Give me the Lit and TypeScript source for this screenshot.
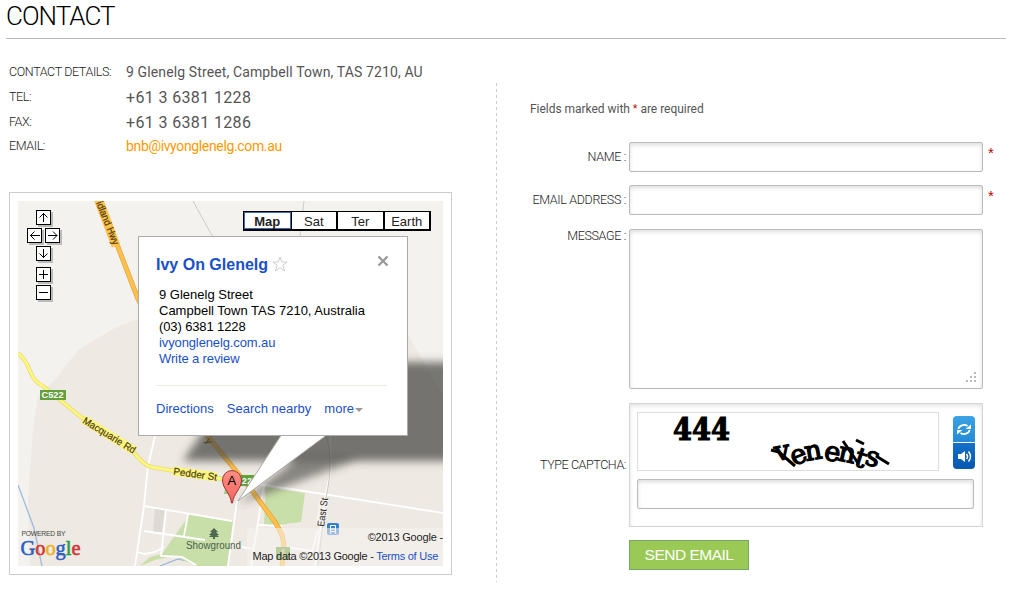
import { LitElement, html, css, svg } from "lit";
import { customElement } from "lit/decorators.js";

@customElement("contact-map")
class ContactMap extends LitElement {
  static styles = css`
    :host { display: block; box-sizing: border-box; width: 443px; height: 383px; border: 1px solid #ccc; padding: 8px; font-family: "Liberation Sans", Arial, sans-serif; }
    * { box-sizing: border-box; }
    .canvas { position: relative; width: 425px; height: 365px; overflow: hidden; }
    .terrain { display: block; width: 425px; height: 365px; }
    .types { position: absolute; left: 225px; top: 10px; display: flex; width: 188px; height: 20px; border: 2px solid #000; border-width: 1px 2px 2px; background: #fff; font-size: 13px; line-height: 19px; text-align: center; }
    .types span { flex: 1; border-left: 2px solid #000; }
    .types span:nth-child(2) { border-left: 1px solid #000; }
    .types .on { border: 1px solid #4269ac; font-weight: bold; line-height: 17px; margin-left: -1px; }
    .card { position: absolute; left: 120px; top: 35px; width: 270px; height: 200px; border: 1px solid #aaa; background: #fff; padding: 18px 20px 0 17px; font-size: 13px; line-height: 16px; color: #000; }
    .head { display: flex; align-items: flex-start; height: 32px; }
    .title { font-size: 16px; line-height: 20px; font-weight: bold; color: #1a50c8; margin-right: 4px; white-space: nowrap; }
    .star { width: 16px; height: 16px; margin-top: 1px; }
    .close { width: 12px; height: 12px; margin: 0 -2px 0 auto; }
    .body { padding-left: 3px; height: 98px; white-space: nowrap; }
    .tight { letter-spacing: -.12px; }
    a { color: #1a50c8; text-decoration: none; }
    .actions { display: flex; gap: 13px; border-top: 1px solid #edeae0; padding-top: 15px; white-space: nowrap; }
    .caret { display: inline-block; border: 4px solid transparent; border-top-color: #999; border-bottom: 0; vertical-align: 1px; margin-left: 1px; }
    .credit { position: absolute; right: 0; bottom: 0; height: 38px; width: 196px; background: rgba(245,244,242,.55); text-align: right; font-size: 11px; line-height: 19px; white-space: nowrap; letter-spacing: -.18px; }
    .credit div:last-child { padding-right: 5px; letter-spacing: -.25px; }
  `;

  pad(x: number, y: number, d: string) {
    return svg`<rect x=${x + 2} y=${y + 2} width="15" height="15" fill="#bbb"/><rect x=${x + .5} y=${y + .5} width="14" height="14" fill="#fff" stroke="#000"/><path d=${d} transform=${`translate(${x} ${y})`} fill="none" stroke="#000"/>`;
  }

  render() {
    return html`<div class="canvas">
      <svg class="terrain" viewBox="18 201 425 365" font-family="Liberation Sans">
        <defs>
          <filter id="soft" x="-20%" y="-20%" width="140%" height="140%"><feGaussianBlur stdDeviation="4"/></filter>
          <linearGradient id="pin" x1="0" y1="0" x2="0" y2="1"><stop offset="0" stop-color="#ff8f85"/><stop offset="1" stop-color="#f4645c"/></linearGradient>
        </defs>
        <rect x="18" y="201" width="425" height="365" fill="#f3f2ef"/>
        <path d="M138 319 115 328 78 350 55 380 38 396 33 430 28 500 30 566H443V395L408 335Z" fill="#eee9e2"/>
        <path d="M18 485 34 528 42 566M160 566 178 559 193 562 214 566" fill="none" stroke="#9cb9df" stroke-width="1.3"/>
        <path d="M190 514 233 521 227 566H197L173 556 155 560 140 566 150 557 162 554Z" fill="#c9dfa9"/>
        <path d="M266 487 305 493 301 522 270 526 264 524Z" fill="#c9dfa9"/>
        <path d="M155 509H165L162 532H153Z" fill="#ded9d2"/>
        <path d="M193 201 210 232 216 241M304 201 300 236" fill="none" stroke="#cfccc7"/>
        <g fill="none" stroke="#fff" stroke-width="1.8">
          <path d="M155 436 148 466 144 506 135 566M144 506 232 521M166 510 161 556 182 557 196 565M188 514 184 536M144 531 205 540M137 552 145 554 155 552 164 547M237 501 228 566M250 483 266 485 443 513M264 485 251 566M259 525 282 526M330 436 331 470 325 497 315 566M242 547 254 549M285 547 312 551 318 530"/>
        </g>
        <path d="M326 436C332 452 331 475 326 497L318 566" fill="none" stroke="#c7c3be"/>
        <g fill="none" stroke-linejoin="round">
          <path d="M97 201 118 247 138 299 205 433 250 488 275 522Q284 535 284 548L282 566" stroke="#e1a642" stroke-width="5"/>
          <path d="M97 201 118 247 138 299 205 433 250 488 275 522Q284 535 284 548L282 566" stroke="#ffc04b" stroke-width="3.500"/>
          <path d="M18 353Q26 360 30 371T43 386L82 418 132 450Q143 465 151 467L235 481" stroke="#e2d666" stroke-width="4"/>
          <path d="M18 353Q26 360 30 371T43 386L82 418 132 450Q143 465 151 467L235 481" stroke="#fff680" stroke-width="2.800"/>
          <path d="M98 198 116 246" stroke="#ffc04b" stroke-width="9"/>
          <path d="M83 419 135 451M173 471 217 477" stroke="#fff680" stroke-width="9"/>
        </g>
        <g fill="#494844" filter="url(#soft)">
          <path d="M183 461 250 362H480V461Z" opacity=".73"/>
          <path d="M298 458H362L238 504Z" opacity=".62"/>
        </g>
        <g fill="#4c3d10" font-size="10" stroke="#4c3d10" stroke-width=".2">
          <text transform="translate(96 203) rotate(68)" textLength="46" lengthAdjust="spacingAndGlyphs">idland Hwy</text>
          <text transform="translate(82 422.500) rotate(31.500)" textLength="60" lengthAdjust="spacingAndGlyphs">Macquarie Rd</text>
          <text transform="translate(173 474.500) rotate(8)" textLength="44" lengthAdjust="spacingAndGlyphs">Pedder St</text>
          <text transform="translate(205 441) rotate(55)" font-size="9">y</text>
        </g>
        <path d="M320 526 324 499" stroke="#f6f3ef" stroke-width="9"/>
        <text transform="translate(324 527) rotate(-82)" font-size="10" textLength="29" lengthAdjust="spacingAndGlyphs" fill="#222">East St</text>
        <g fill="#63a03c"><rect x="40" y="390" width="26" height="10"/><rect x="230" y="475" width="25" height="11"/><path d="M225 489h8v5h-9z" fill="#9acb7b"/></g>
        <g fill="#fff" font-size="8.500" font-weight="bold"><text x="41.500" y="398" textLength="22" lengthAdjust="spacingAndGlyphs">C522</text><text x="242" y="483.500" textLength="10">22</text></g>
        <rect x="276" y="547" width="14" height="13" fill="#6d9c42"/><path d="M283 549v11" stroke="#c6bb54" stroke-width="3"/>
        <path d="m214 528-4 4h2l-3 3h2l-2 2h4v2h2v-2h4l-2-2h2l-3-3h2z" fill="#506a50"/>
        <text x="186" y="549" font-size="10" textLength="55" lengthAdjust="spacingAndGlyphs" fill="#4a604c">Showground</text>
        <path d="M282 434 238 501 328 434" fill="#fff" stroke="#aaa"/>
        <path d="M231.500 503C230.500 493 222.500 489 222.500 480A9.500 9.500 0 0 1 241.500 480C241.500 489 233.500 493 232.500 503Z" fill="url(#pin)" stroke="#9b3732"/>
        <text x="227.500" y="485" font-size="13">A</text>
        <rect x="327" y="523" width="12" height="12" rx="2" fill="#367fce"/><path d="M330.500 525.500h5v6h-5zM331 532l-1 2M335 532l1 2" fill="#367fce" stroke="#fff"/><path d="M331 529h4" stroke="#fff"/>
        ${this.pad(36, 210, "M7.500 3v9M7.500 3.500l-4 4M7.500 3.500l4 4")}
        ${this.pad(27, 228, "M3 7.500h10M3.500 7.500l4-4M3.500 7.500l4 4")}
        ${this.pad(45, 228, "M3 7.500h9M12 7.500l-4-4M12 7.500l-4 4")}
        ${this.pad(36, 246, "M7.500 3v9M7.500 11.500l-4-4M7.500 11.500l4-4")}
        ${this.pad(36, 267, "M3 7.500h9M7.500 3v9")}
        ${this.pad(36, 285, "M3 7.500h9")}
        <text x="21.500" y="536" font-size="6.800" fill="#444" textLength="44">POWERED BY</text>
        <text y="555" font-family="Liberation Serif" font-size="22" textLength="60" lengthAdjust="spacingAndGlyphs" x="20.500" stroke-width=".6"><tspan fill="#2c5fc5" stroke="#2c5fc5">G</tspan><tspan fill="#d53331" stroke="#d53331">o</tspan><tspan fill="#e8b321" stroke="#e8b321">o</tspan><tspan fill="#2c5fc5" stroke="#2c5fc5">g</tspan><tspan fill="#249b42" stroke="#249b42">l</tspan><tspan fill="#d53331" stroke="#d53331">e</tspan></text>
      </svg>
      <div class="credit"><div>©2013 Google -</div><div>Map data ©2013 Google - <a>Terms of Use</a></div></div>
      <div class="types"><span class="on">Map</span><span>Sat</span><span>Ter</span><span>Earth</span></div>
      <div class="card">
        <div class="head"><span class="title">Ivy On Glenelg</span>
          <svg class="star" viewBox="0 0 16 16"><path d="m8 1 1.800 5H15l-4.200 3.200L12.500 15 8 11.500 3.500 15l1.700-5.800L1 6h5.200z" fill="#fff" stroke="#ccc"/></svg>
          <svg class="close" viewBox="0 0 12 12"><path d="m1.500 1.500 9 9m0-9-9 9" stroke="#999" stroke-width="2.300"/></svg></div>
        <div class="body">9 Glenelg Street<br>Campbell Town TAS 7210, Australia<br><span class="tight">(03) 6381 1228</span><br><a class="tight">ivyonglenelg.com.au</a><br><a class="tight">Write a review</a></div>
        <div class="actions"><a>Directions</a><a>Search nearby</a><a>more<i class="caret"></i></a></div>
      </div>
    </div>`;
  }
}

@customElement("app-root")
class AppRoot extends LitElement {
  static styles = css`
    :host { display: block; width: 1009px; height: 600px; overflow: hidden; background: #fff; font-family: Roboto, sans-serif; font-weight: 300; color: #222; }
    * { box-sizing: border-box; }
    h1 { margin: 0 3px 0 6px; height: 39px; border-bottom: 1px solid #bbb; font-size: 26px; line-height: 33px; font-weight: 300; color: #000; letter-spacing: -.95px; }
    .columns { display: flex; }
    .left { flex: none; width: 496px; padding: 21px 0 0 9px; }
    .details { display: grid; grid-template-columns: 117px 1fr; grid-template-rows: 25px 25px 24px 25px; height: 132px; line-height: 25px; font-size: 12.500px; white-space: nowrap; letter-spacing: -.38px; }
    .details span:nth-child(odd) { line-height: 24px; }
    .details .addr { font-size: 14px; font-weight: 400; color: #555; letter-spacing: .12px; }
    .details .phone { font-size: 16px; font-weight: 400; color: #555; letter-spacing: .36px; }
    .details .mail { color: #f90; font-weight: 400; font-size: 14px; letter-spacing: -.35px; }
    .rule { flex: none; width: 1px; height: 499px; margin-top: 44px; background: repeating-linear-gradient(#ccc 0 3px, transparent 3px 6px); }
    .form { width: 500px; padding: 62px 0 0 33px; }
    .note { height: 41px; font-size: 12px; line-height: 16px; font-weight: 400; color: #555; letter-spacing: -.03px; }
    .red { color: #b00; font-family: "Liberation Sans"; font-weight: 400; }
    .row { display: grid; grid-template-columns: 96px 354px 1fr; column-gap: 3px; font-size: 12.500px; letter-spacing: -.33px; }
    .row label { text-align: right; white-space: nowrap; }
    .field { display: block; border: 1px solid #bbb; border-radius: 2px; box-shadow: inset 0 2px 4px #ddd; background: #fff; outline: 0; padding: 0 6px; width: 100%; height: 30px; }
    .line { height: 43px; line-height: 30px; }
    .line .red { padding-left: 2px; line-height: 22px; font-size: 15px; }
    .msg { height: 174px; line-height: 14px; margin-top: 1px; }
    .area { display: flex; align-items: flex-end; justify-content: flex-end; height: 160px; padding: 5px; }
    .grip { width: 12px; height: 12px; }
    .captcha { line-height: 124px; height: 137px; }
    .captcha label { letter-spacing: -.42px; }
    .box { height: 124px; border: 1px solid #d5d5d5; box-shadow: inset 0 2px 4px #e2e2e2; padding: 8px 8px 0 7px; line-height: 0; }
    .top { display: flex; justify-content: space-between; height: 67px; }
    .challenge { width: 302px; height: 59px; border: 1px solid #ddd; letter-spacing: 0; }
    .btns { width: 22px; height: 53px; margin: 4px -1px 0 0; }
    .send { display: block; margin-left: 99px; width: 120px; height: 30px; border: 1px solid #75a866; background: #9aca55; color: #fff; font: 400 15.500px/28px "Liberation Sans"; letter-spacing: -.5px; padding: 0; }
  `;

  render() {
    const dots = [[9, 1], [5, 5], [9, 5], [1, 9], [5, 9], [9, 9]];
    return html`
      <h1>CONTACT</h1>
      <div class="columns">
        <section class="left">
          <div class="details">
            <span>CONTACT DETAILS:</span><span class="addr">9 Glenelg Street, Campbell Town, TAS 7210, AU</span>
            <span>TEL:</span><span class="phone">+61 3 6381 1228</span>
            <span>FAX:</span><span class="phone">+61 3 6381 1286</span>
            <span>EMAIL:</span><span class="mail">bnb@ivyonglenelg.com.au</span>
          </div>
          <contact-map></contact-map>
        </section>
        <div class="rule"></div>
        <section class="form">
          <div class="note">Fields marked with <span class="red">*</span> are required</div>
          <div class="row line"><label>NAME :</label><input class="field"><span class="red">*</span></div>
          <div class="row line"><label>EMAIL ADDRESS :</label><input class="field"><span class="red">*</span></div>
          <div class="row msg"><label>MESSAGE :</label><div class="field area"><svg class="grip" viewBox="0 0 12 12">${dots.map(([x, y]) => svg`<rect x=${x} y=${y} width="2" height="2" fill="#bbb"/>`)}</svg></div></div>
          <div class="row captcha"><label>TYPE CAPTCHA:</label>
            <div class="box">
              <div class="top">
                <svg class="challenge" viewBox="638 413 300 57">
                  <text x="673" y="440" font-family="DejaVu Serif" font-weight="bold" font-size="32" textLength="57" lengthAdjust="spacingAndGlyphs" fill="#000" stroke="#000" stroke-width="1.200">444</text>
                  <g font-family="DejaVu Serif" font-size="27" fill="#000" stroke="#000" stroke-width="1.300">
                    <text x="776 794 806 823 837 853 864 875" y="461 466 461 459 460 465 464 465" rotate="-10 -22 -10 12 12 18 14">venents</text>
                  </g>
                  <path d="M771 450l8 2 16 14M843 441l15 22M856 440l8 4M876 456l13 8" fill="none" stroke="#000" stroke-width="3"/>
                </svg>
                <svg class="btns" viewBox="0 0 22 53">
                  <defs><linearGradient id="blue" x1="0" y1="0" x2="0" y2="1"><stop stop-color="#3aa3e5"/><stop offset=".5" stop-color="#2688d4"/><stop offset=".5" stop-color="#1370c8"/><stop offset="1" stop-color="#0758b0"/></linearGradient></defs>
                  <rect width="22" height="53" rx="4" fill="url(#blue)"/><path d="M0 26.500h22" stroke="#fff"/>
                  <path d="M5.500 13a5.500 4.500 0 0 1 9-3M16.500 14a5.500 4.500 0 0 1-9 3" fill="none" stroke="#fff" stroke-width="1.800"/><path d="M12.500 13H18V8.500zM9.500 14H4v4.500z" fill="#fff"/>
                  <path d="M5 38h3l4-3v11l-4-3H5z" fill="#fff"/><path d="M13.500 38q2 2.500 0 5M15.500 35.500q4 5 0 10" fill="none" stroke="#fff" stroke-width="1.500"/>
                </svg>
              </div>
              <input class="field">
            </div>
          </div>
          <button class="send">SEND EMAIL</button>
        </section>
      </div>`;
  }
}
